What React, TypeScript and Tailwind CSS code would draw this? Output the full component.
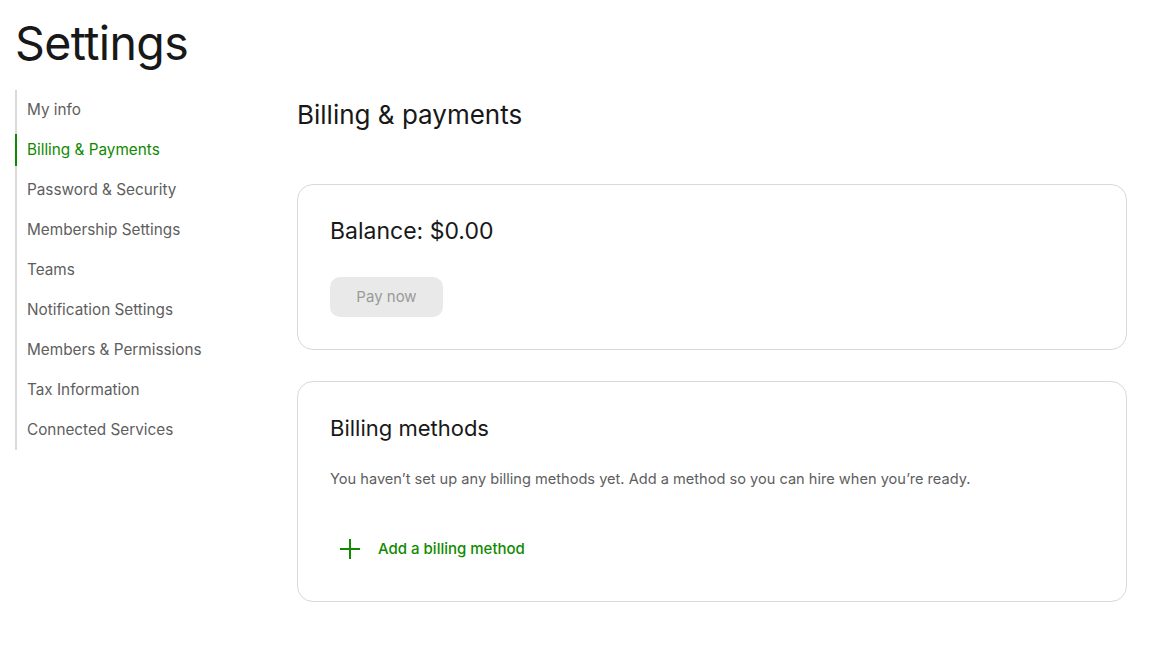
import React from "react";

const nav = [
  "My info",
  "Billing & Payments",
  "Password & Security",
  "Membership Settings",
  "Teams",
  "Notification Settings",
  "Members & Permissions",
  "Tax Information",
  "Connected Services",
];

export default function App() {
  return (
    <div className="min-h-[647px] w-[1159px] bg-white text-[#181818]" style={{ fontFamily: "Inter, 'Liberation Sans', sans-serif" }}>
      <h1 className="pl-[15px] pt-[13px] text-[46.5px] leading-[60px] font-normal tracking-[-0.6px] text-[#181818]">Settings</h1>
      <div className="mt-[17px] flex">
        <nav className="ml-[15px] w-[250px] shrink-0 self-start border-l-2 border-[#d9d9d9]">
          {nav.map((item, i) => (
            <div
              key={item}
              className={
                "flex h-[40px] items-center pl-[10px] text-[15.3px] " +
                (i === 1 ? "relative text-[#108a00]" : "text-[#5e5e5e]")
              }
            >
              {i === 1 && <span className="absolute left-[-2px] top-[4px] h-[32px] w-[2px] bg-[#108a00]" />}
              {item}
            </div>
          ))}
        </nav>
        <main className="ml-[32px] w-[830px]">
          <h2 className="mt-[9px] text-[26px] leading-[32px] font-normal">Billing &amp; payments</h2>
          <section className="mt-[53px] rounded-[16px] border border-[#d9d9d9] px-[32px] pt-[31px] pb-[32px]">
            <div className="text-[23px] leading-[30px]">Balance: $0.00</div>
            <button className="mt-[31px] h-[40px] w-[113px] rounded-[10px] bg-[#e9e9e9] text-[15px] text-[#9a9a9a]">Pay now</button>
          </section>
          <section className="mt-[31px] rounded-[16px] border border-[#d9d9d9] px-[32px] pt-[31px] pb-[32px]">
            <div className="text-[22px] leading-[30px]">Billing methods</div>
            <p className="mt-[25px] text-[14.6px] leading-[22px] text-[#5e5e5e]">
              You haven’t set up any billing methods yet. Add a method so you can hire when you’re ready.
            </p>
            <button className="mt-[39px] flex h-[40px] items-center gap-[17px] pl-[9px] text-[15px] font-medium text-[#108a00]">
              <svg width="22" height="22" viewBox="0 0 22 22" fill="none">
                <path d="M11 1v20M1 11h20" stroke="#108a00" strokeWidth="2" />
              </svg>
              Add a billing method
            </button>
          </section>
        </main>
      </div>
    </div>
  );
}
